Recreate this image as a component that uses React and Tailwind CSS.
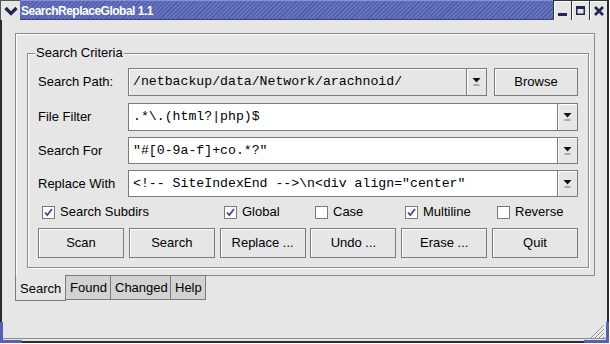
import { useState } from 'react'

const navy = '#1f2555'

function Arrow() {
  return (
    <svg width="9" height="10" viewBox="0 0 9 10">
      <path d="M0.5 1h8L4.5 5.5z" fill="#111" />
      <rect x="1.5" y="7" width="6" height="2" fill="#a8a8a8" />
    </svg>
  )
}

function Combo({ value, editable = true, className = '' }) {
  return (
    <div className={`flex h-full border border-[#7b7b7b] ${editable ? 'bg-white' : 'bg-[#e6e6e6] shadow-[inset_1px_1px_0_#fff]'} ${className}`}>
      <div className="flex-1 flex items-center pl-[4px] overflow-hidden whitespace-pre font-['Liberation_Mono',monospace] text-[13.2px]">
        {value}
      </div>
      <div className="w-[20px] border-l border-[#7b7b7b] bg-[#e6e6e6] shadow-[inset_1px_1px_0_#fff] flex items-center justify-center">
        <Arrow />
      </div>
    </div>
  )
}

function Check({ checked, label, className = '' }) {
  const [on, setOn] = useState(checked)
  return (
    <label className={`flex items-center ${className}`} onClick={() => setOn(!on)}>
      <span className="w-[13px] h-[13px] shrink-0 bg-white border border-[#7b7b7b] flex items-center justify-center">
        {on && (
          <svg width="11" height="11" viewBox="0 0 11 11">
            <path d="M2 5.5 L4.3 8 L9 2" fill="none" stroke="#3d48a6" strokeWidth="1.8" />
          </svg>
        )}
      </span>
      <span className="ml-[5px]">{label}</span>
    </label>
  )
}

function Btn({ children, className = '' }) {
  return (
    <button className={`h-full border border-[#7b7b7b] bg-[#e6e6e6] shadow-[inset_1px_1px_0_#fff] flex items-center justify-center ${className}`}>
      {children}
    </button>
  )
}

function TitleBar() {
  return (
    <div className="flex h-[20px] shrink-0 border-r-2 border-[#2b2b2b]">
      <div className="w-[20px] bg-[#e6e6e6] border-l border-t border-[#555] flex items-center justify-center">
        <svg width="14" height="10" viewBox="0 0 14 10">
          <polyline points="1.5,2 7,7.5 12.5,2" fill="none" stroke={navy} strokeWidth="3.2" />
        </svg>
      </div>
      <div className="flex-1 flex items-center pl-[1px] pt-[1px] text-white font-bold text-[12px] tracking-[-0.5px] border-t border-[#8891d4] border-b border-b-[#39407a] bg-[repeating-linear-gradient(135deg,#5360ad_0px,#5360ad_1.6px,#6a75c2_1.6px,#6a75c2_3px)]">
        SearchReplaceGlobal 1.1
      </div>
      <div className="flex">
        <div className="w-[18px] border-l border-t border-[#333] bg-[#e6e6e6] shadow-[inset_1px_1px_0_#fff] flex items-end justify-center pb-[4px]">
          <svg width="9" height="3" viewBox="0 0 9 3">
            <rect width="9" height="3" fill={navy} />
          </svg>
        </div>
        <div className="w-[18px] border-l border-t border-[#333] bg-[#e6e6e6] shadow-[inset_1px_1px_0_#fff] flex items-center justify-center">
          <svg width="9" height="9" viewBox="0 0 9 9">
            <path d="M0 0h9v9H0z M1.5 3v4.5h6V3z" fill={navy} fillRule="evenodd" />
          </svg>
        </div>
        <div className="w-[18px] border-l border-t border-[#333] bg-[#e6e6e6] shadow-[inset_1px_1px_0_#fff] flex items-center justify-center">
          <svg width="10" height="10" viewBox="0 0 10 10">
            <path d="M1 1L9 9M9 1L1 9" stroke={navy} strokeWidth="2.6" />
          </svg>
        </div>
      </div>
    </div>
  )
}

export default function App() {
  return (
    <div className="w-[610px] h-[344px] bg-white font-['Liberation_Sans',Arial,sans-serif] text-[13px] text-black">
      <div className="relative w-[609px] h-[343px] flex flex-col bg-[#e6e6e6]">
        <TitleBar />
        <div className="flex-1 flex flex-col border-l-2 border-r-2 border-b-2 border-[#2b2b2b] pl-[13px] pt-[13px] shadow-[inset_0_-2px_0_#e6e6e6,inset_0_-3px_0_#8a8a8a]">
          <div className="w-[580px] h-[243px] shrink-0 border border-[#8a8a8a] shadow-[inset_1px_1px_0_#fff] pl-[11px] pt-[19px]">
            <div className="relative w-[562px] h-[215px] border border-[#8a8a8a] shadow-[inset_1px_1px_0_#fff,1px_1px_0_#fff] pl-[10px] pr-[10px] pt-[14px] flex flex-col">
              <span className="absolute -top-[9px] left-[7px] px-[1px] bg-[#e6e6e6] leading-[16px]">Search Criteria</span>

              <div className="flex h-[28px]">
                <div className="w-[90px] flex items-center">Search Path:</div>
                <Combo value="/netbackup/data/Network/arachnoid/" editable={false} className="w-[359px]" />
                <Btn className="ml-[7px] w-[84px]">Browse</Btn>
              </div>

              <div className="flex h-[28px] mt-[7px]">
                <div className="w-[90px] flex items-center">File Filter</div>
                <Combo value={'.*\\.(html?|php)$'} className="w-[450px]" />
              </div>

              <div className="flex h-[27px] mt-[6px]">
                <div className="w-[90px] flex items-center">Search For</div>
                <Combo value={'"#[0-9a-f]+co.*?"'} className="w-[450px]" />
              </div>

              <div className="flex h-[27px] mt-[6px]">
                <div className="w-[90px] flex items-center">Replace With</div>
                <Combo value={'<!-- SiteIndexEnd -->\\n<div align="center"'} className="w-[450px]" />
              </div>

              <div className="flex h-[16px] mt-[7px] pl-[4px]">
                <Check checked label="Search Subdirs" className="w-[182px]" />
                <Check checked label="Global" className="w-[91px]" />
                <Check label="Case" className="w-[90px]" />
                <Check checked label="Multiline" className="w-[92px]" />
                <Check label="Reverse" />
              </div>

              <div className="flex justify-between h-[30px] mt-[8px]">
                <Btn className="w-[86px]">Scan</Btn>
                <Btn className="w-[86px]">Search</Btn>
                <Btn className="w-[86px]">Replace ...</Btn>
                <Btn className="w-[86px]">Undo ...</Btn>
                <Btn className="w-[86px]">Erase ...</Btn>
                <Btn className="w-[86px]">Quit</Btn>
              </div>
            </div>
          </div>

          <div className="flex -mt-px">
            <div className="w-[51px] h-[26px] pl-[4px] pt-[2px] flex items-center bg-[#e6e6e6] border-l border-r border-b border-[#7b7b7b]">Search</div>
            <div className="w-[45px] h-[25px] pl-[4px] flex items-center bg-[#d2d2d2] border-t border-r border-b border-[#7b7b7b]">Found</div>
            <div className="w-[60px] h-[25px] pl-[4px] flex items-center bg-[#d2d2d2] border-t border-r border-b border-[#7b7b7b]">Changed</div>
            <div className="w-[35px] h-[25px] pl-[4px] flex items-center bg-[#d2d2d2] border-t border-r border-b border-[#7b7b7b]">Help</div>
          </div>
        </div>

        <span className="absolute left-0 bottom-0 w-[3px] h-[21px] bg-[#5660b8]" />
        <span className="absolute left-0 bottom-0 w-[22px] h-[3px] bg-[#5660b8]" />
        <span className="absolute right-0 bottom-0 w-[3px] h-[21px] bg-[#5660b8]" />
        <span className="absolute right-0 bottom-0 w-[25px] h-[3px] bg-[#5660b8]" />
        <svg className="absolute right-[5px] bottom-[5px]" width="15" height="15" viewBox="0 0 15 15">
          <path d="M15 2L2 15M15 6L6 15M15 10L10 15M15 14L14 15" stroke="#8a8a8a" strokeWidth="1" />
          <path d="M15 3L3 15M15 7L7 15M15 11L11 15" stroke="#fff" strokeWidth="1" />
        </svg>
      </div>
    </div>
  )
}
